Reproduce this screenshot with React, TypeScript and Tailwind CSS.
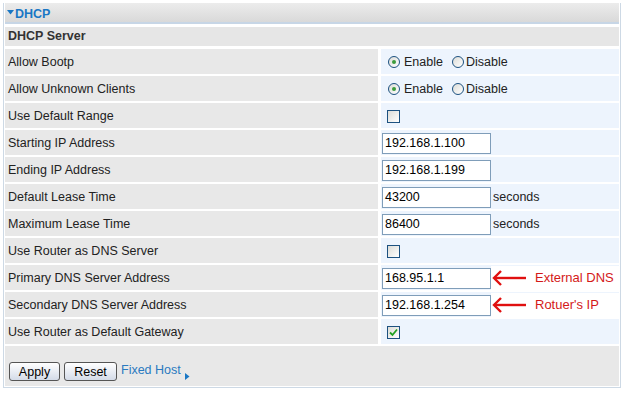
import React from "react";

type Row = { label: string; kind: "radio" | "check" | "checked" | "input"; value?: string; suffix?: string; note?: string };

const rows: Row[] = [
  { label: "Allow Bootp", kind: "radio" },
  { label: "Allow Unknown Clients", kind: "radio" },
  { label: "Use Default Range", kind: "check" },
  { label: "Starting IP Address", kind: "input", value: "192.168.1.100" },
  { label: "Ending IP Address", kind: "input", value: "192.168.1.199" },
  { label: "Default Lease Time", kind: "input", value: "43200", suffix: "seconds" },
  { label: "Maximum Lease Time", kind: "input", value: "86400", suffix: "seconds" },
  { label: "Use Router as DNS Server", kind: "check" },
  { label: "Primary DNS Server Address", kind: "input", value: "168.95.1.1", note: "External DNS" },
  { label: "Secondary DNS Server Address", kind: "input", value: "192.168.1.254", note: "Rotuer's IP" },
  { label: "Use Router as Default Gateway", kind: "checked" },
];

function Radio({ on }: { on: boolean }) {
  return (
    <span className="w-[12px] h-[12px] rounded-full border border-[#1c5180] bg-gradient-to-br from-[#dcdcd7] to-white flex items-center justify-center">
      {on && <span className="w-[4px] h-[4px] rounded-full bg-[#3c9c3c]" />}
    </span>
  );
}

function Check({ on }: { on: boolean }) {
  return (
    <span className="ml-[5px] w-[13px] h-[13px] border border-[#1c5180] bg-gradient-to-br from-[#dcdcd7] to-white flex items-center justify-center">
      {on && (
        <svg width="9" height="9" viewBox="0 0 9 9">
          <path d="M1 4.5 L3.5 7 L8 1.5" fill="none" stroke="#21a121" strokeWidth="1.8" />
        </svg>
      )}
    </span>
  );
}

function Arrow() {
  return (
    <svg width="36" height="18" viewBox="0 0 36 18" className="shrink-0">
      <path d="M3 9 H35" stroke="#e01010" strokeWidth="2.4" />
      <path d="M10 2 L3 9 L10 16" fill="none" stroke="#e01010" strokeWidth="2.4" />
    </svg>
  );
}

function Value({ row }: { row: Row }) {
  if (row.kind === "radio") {
    return (
      <div className="flex items-center pl-[6px]">
        <Radio on />
        <span className="ml-[4px]">Enable</span>
        <span className="ml-[9px]"><Radio on={false} /></span>
        <span className="ml-[2px]">Disable</span>
      </div>
    );
  }
  if (row.kind === "check" || row.kind === "checked") return <Check on={row.kind === "checked"} />;
  return (
    <div className="flex items-center w-full">
      <div className="w-[109px] h-[21px] border border-[#7f9db9] bg-white flex items-center pl-[2px] text-black">
        {row.value}
      </div>
      {row.suffix && <span className="ml-[2px]">{row.suffix}</span>}
      {row.note && (
        <div className="flex items-center bg-white h-[25px] flex-1">
          <Arrow />
          <span className="ml-[8px] text-[13px] text-[#d41919]">{row.note}</span>
        </div>
      )}
    </div>
  );
}

export default function App() {
  return (
    <div className="w-[640px] h-[395px] bg-white text-[12.5px] text-[#222] font-['Liberation_Sans',Arial,sans-serif] pt-[3px] pl-[3px]">
      <div className="w-[618px] border-l border-r border-b border-[#cdd9e5] pl-[1px] pr-[1px] pb-[1px]">
        <div className="h-[21px] bg-gradient-to-b from-[#ececec] to-[#d9d9d9] border-b-2 border-[#c7d6e6] flex items-center pl-[2px] pt-[3px]">
          <svg width="7" height="5" viewBox="0 0 7 5" className="mr-[1px] mb-[3px]">
            <path d="M0 0 H7 L3.5 4.5 Z" fill="#1a77c4" />
          </svg>
          <span className="font-bold text-[#1a77c4]">DHCP</span>
        </div>
        <div className="mt-[3px] h-[19px] bg-[#e6e6e6] flex items-center pl-[3px] font-bold text-[#333]">DHCP Server</div>
        <div className="mt-[3px] grid grid-cols-[373px_1fr] gap-x-[3px] gap-y-[2px]">
          {rows.map((r) => (
            <React.Fragment key={r.label}>
              <div className="h-[25px] bg-[#e8e8e8] flex items-center pl-[3px] pt-[1px]">{r.label}</div>
              <div className="h-[25px] bg-[#edf4fd] flex items-center pl-[1px] pt-[1px]">
                <Value row={r} />
              </div>
            </React.Fragment>
          ))}
        </div>
        <div className="mt-[2px] h-[40px] bg-[#e8e8e8] flex items-end pb-[5px] pl-[4px]">
          <button className="h-[19px] w-[51px] rounded-[3px] border border-[#555] bg-gradient-to-b from-white to-[#d4dbe8] text-[12.5px] text-black">Apply</button>
          <button className="ml-[4px] h-[19px] w-[53px] rounded-[3px] border border-[#555] bg-gradient-to-b from-white to-[#d4dbe8] text-[12.5px] text-black">Reset</button>
          <span className="ml-[4px] mb-[1px] text-[#2a7ac0]">Fixed Host</span>
          <svg width="5" height="7" viewBox="0 0 5 7" className="ml-[4px] mb-[1px]">
            <path d="M0 0 L4.5 3.5 L0 7 Z" fill="#1a77c4" />
          </svg>
        </div>
      </div>
    </div>
  );
}
